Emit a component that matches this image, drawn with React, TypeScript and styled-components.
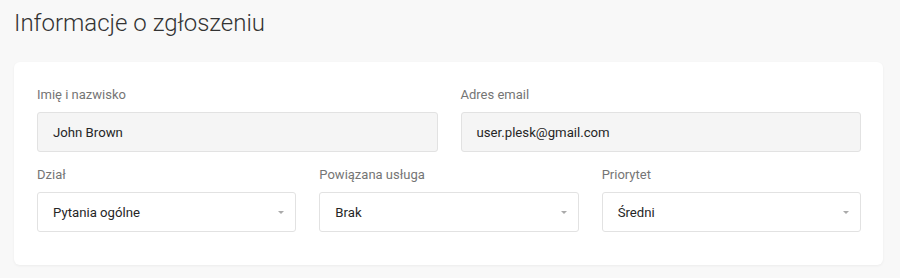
import React from "react";
import styled, { createGlobalStyle } from "styled-components";

const Global = createGlobalStyle`
  html, body { margin: 0; padding: 0; background: #f8f8f8; }
  body { font-family: Roboto, "Liberation Sans", Arial, sans-serif; }
  * { box-sizing: border-box; }
`;

const Page = styled.div`
  padding: 9px 17px 0 14px;
  width: 900px;
  height: 278px;
  background: #f8f8f8;
`;

const Title = styled.h1`
  margin: 0 0 25px 0;
  font-size: 24px;
  line-height: 28px;
  font-weight: 300;
  color: #333;
`;

const Card = styled.div`
  background: #fff;
  border-radius: 6px;
  box-shadow: 0 1px 3px rgba(0, 0, 0, 0.05);
  padding: 25px 22px 33px 23px;
  display: flex;
  flex-direction: column;
  gap: 15px;
`;

const Row = styled.div<{ $cols: number }>`
  display: grid;
  grid-template-columns: repeat(${(p) => p.$cols}, 1fr);
  column-gap: 23px;
`;

const Field = styled.div`
  display: flex;
  flex-direction: column;
  gap: 9px;
`;

const Label = styled.label`
  font-size: 13px;
  line-height: 16px;
  color: #757575;
`;

const Input = styled.div`
  height: 40px;
  border: 1px solid #e2e2e2;
  border-radius: 3px;
  background: #f5f5f5;
  padding: 0 15px;
  display: flex;
  align-items: center;
  font-size: 13.2px;
  color: #262626;
`;

const Select = styled(Input)`
  background: #fff;
  justify-content: space-between;
  padding-right: 11px;
`;

const Caret = styled.span`
  width: 0;
  height: 0;
  border-left: 3px solid transparent;
  border-right: 3px solid transparent;
  border-top: 3.5px solid #aaa;
`;

export default function App() {
  return (
    <>
      <Global />
      <Page>
        <Title>Informacje o zgłoszeniu</Title>
        <Card>
          <Row $cols={2}>
            <Field>
              <Label>Imię i nazwisko</Label>
              <Input>John Brown</Input>
            </Field>
            <Field>
              <Label>Adres email</Label>
              <Input>user.plesk@gmail.com</Input>
            </Field>
          </Row>
          <Row $cols={3}>
            <Field>
              <Label>Dział</Label>
              <Select>
                Pytania ogólne
                <Caret />
              </Select>
            </Field>
            <Field>
              <Label>Powiązana usługa</Label>
              <Select>
                Brak
                <Caret />
              </Select>
            </Field>
            <Field>
              <Label>Priorytet</Label>
              <Select>
                Średni
                <Caret />
              </Select>
            </Field>
          </Row>
        </Card>
      </Page>
    </>
  );
}
